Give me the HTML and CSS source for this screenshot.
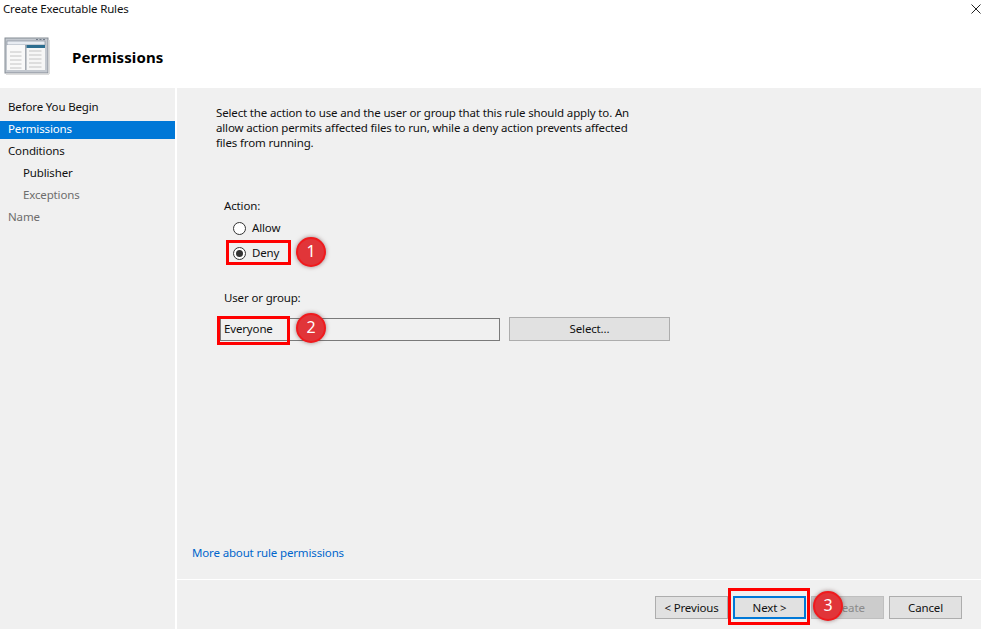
FILE: index.html
```html
<!DOCTYPE html>
<html lang="en">
<head>
<meta charset="utf-8">
<title>Create Executable Rules</title>
<link rel="stylesheet" href="styles.css">
</head>
<body>
<div class="dialog">
  <header class="top">
    <div class="titlebar">
      <span class="title">Create Executable Rules</span>
      <svg class="close" width="10" height="10" viewBox="0 0 10 10"><path d="M0.5 0.5L9.5 9.5M9.5 0.5L0.5 9.500" stroke="#222" stroke-width="1" fill="none"/></svg>
    </div>
    <div class="banner">
      <svg class="logo" width="46" height="38" viewBox="0 0 46 38">
        <rect x="1" y="1" width="43" height="35" fill="#c3c8cf" stroke="#868d96"/>
        <rect x="44.500" y="3" width="1.500" height="34" fill="#dcdcdc"/>
        <rect x="2" y="36.500" width="43" height="1.500" fill="#dcdcdc"/>
        <rect x="3" y="4" width="38" height="4" fill="#e8ecf2" stroke="#7b8592" stroke-width=".6"/>
        <rect x="3" y="8" width="18.500" height="25" fill="#f9f9f9"/>
        <rect x="21.500" y="8" width="1" height="25" fill="#6d7580"/>
        <rect x="22.500" y="8" width="18.500" height="25" fill="#f6f6f6"/>
        <rect x="22.500" y="8" width="18.500" height="3" fill="#2c6d8f"/>
        <path d="M6 15h11.500M6 19h11.500M6 23h11.500M6 27h11.500M6 31h11.500M25 14h12.500M25 18h12.500M25 22h12.500M25 26h12.500M25 30h12.500" stroke="#c4c4c4" stroke-width="1" fill="none"/>
        <path d="M32 2.500h2M35.500 2.500h2M39 2.500h2" stroke="#6f7a88" stroke-width="1" fill="none"/>
      </svg>
      <h1 class="heading">Permissions</h1>
    </div>
  </header>
  <div class="body">
    <nav class="nav">
      <div class="nav-item">Before You Begin</div>
      <div class="nav-item active">Permissions</div>
      <div class="nav-item">Conditions</div>
      <div class="nav-item sub">Publisher</div>
      <div class="nav-item sub muted">Exceptions</div>
      <div class="nav-item muted">Name</div>
    </nav>
    <main class="main">
      <div class="content">
        <p class="intro">Select the action to use and the user or group that this rule should apply to. An allow action permits affected files to run, while a deny action prevents affected files from running.</p>
        <div class="field-action">
          <div class="label action-label">Action:</div>
          <div class="radio-row"><span class="radio"></span><span class="radio-text">Allow</span></div>
          <div class="radio-row"><span class="radio on"></span><span class="radio-text">Deny</span></div>
        </div>
        <div class="field-user">
          <div class="label">User or group:</div>
          <div class="user-row">
            <div class="input">Everyone</div>
            <div class="btn select">Select...</div>
          </div>
        </div>
        <a class="more" href="#">More about rule permissions</a>
      </div>
      <footer class="footer">
        <div class="btn wiz">&lt; Previous</div>
        <div class="btn wiz next">Next &gt;</div>
        <div class="btn wiz disabled">Create</div>
        <div class="btn wiz">Cancel</div>
      </footer>
    </main>
  </div>
  <div class="mark box-1"></div>
  <div class="mark box-2"></div>
  <div class="mark box-3"></div>
  <div class="badge badge-1">1</div>
  <div class="badge badge-2">2</div>
  <div class="badge badge-3">3</div>
</div>
</body>
</html>
```
FILE: styles.css
```css
* { box-sizing: border-box; }
html, body { margin: 0; padding: 0; }
body { font-family: "Noto Sans", "Open Sans", sans-serif; font-size: 11.5px; letter-spacing: -0.15px; color: #111; background: #fff; }
.dialog { position: relative; width: 981px; height: 629px; overflow: hidden; display: flex; flex-direction: column; }
.top { height: 88px; background: #fff; flex: none; }
.titlebar { height: 17px; display: flex; justify-content: space-between; align-items: flex-start; padding: 1px 0 0 3px; }
.title { line-height: 15px; }
.close { margin-top: 3px; flex: none; }
.banner { display: flex; align-items: flex-start; padding: 20px 0 0 4px; }
.logo { flex: none; }
.heading { margin: 10px 0 0 22px; font-size: 15px; line-height: 20px; font-weight: 700; color: #000; letter-spacing: 0.1px; }
.body { flex: 1; display: flex; background: #fff; min-height: 0; }
.nav { width: 175px; flex: none; background: #f0f0f0; padding-top: 9px; }
.nav-item { height: 22px; line-height: 20px; padding-left: 8px; color: #111; }
.nav-item.active { height: 18px; line-height: 16px; margin: 2px 0; background: #0078d7; color: #fff; }
.nav-item.sub { padding-left: 23px; }
.nav-item.muted { color: #6d6d6d; }
.main { margin-left: 2px; flex: 1; background: #f0f0f0; display: flex; flex-direction: column; min-width: 0; }
.content { flex: 1; padding: 17px 0 0 15px; display: flex; flex-direction: column; border-bottom: 1px solid #fff; }
.intro { margin: 0 0 0 24px; width: 424px; line-height: 15px; }
.field-action { margin: 48px 0 0 32px; }
.label { line-height: 14px; padding-bottom: 2px; }
.action-label { line-height: 16px; padding-bottom: 0; }
.radio-row { display: flex; align-items: center; gap: 6px; height: 25px; margin-left: 9px; }
.radio-text { padding-bottom: 2px; }
.field-action .label + .radio-row { margin-top: 2px; }
.radio { width: 13px; height: 13px; border: 1px solid #333; border-radius: 50%; background: #fff; position: relative; display: block; flex: none; }
.radio.on::after { content: ""; position: absolute; left: 2px; top: 2px; width: 7px; height: 7px; border-radius: 50%; background: #333; }
.field-user { margin: 25px 0 0 32px; }
.user-row { display: flex; align-items: flex-start; gap: 9px; margin-top: 10px; margin-left: -4px; }
.input { width: 280px; height: 23px; margin-top: 1px; border: 1px solid #7a7a7a; background: #f0f0f0; line-height: 19px; padding-left: 3px; }
.btn { border: 1px solid #adadad; background: #e1e1e1; text-align: center; color: #111; }
.select { width: 161px; height: 24px; line-height: 21px; }
.more { margin: 203px 0 0 0; color: #0066cc; text-decoration: none; line-height: 17px; }
.footer { height: 49px; flex: none; display: flex; align-items: flex-start; justify-content: flex-end; gap: 5px; padding: 16px 19px 0 0; }
.wiz { width: 73px; height: 23px; line-height: 21px; }
.next { border: 2px solid #0078d7; line-height: 19px; }
.disabled { background: #cccccc; border-color: #bfbfbf; color: #8a8a8a; }
.mark { position: absolute; border: 3px solid #f00; }
.box-1 { left: 226px; top: 240px; width: 65px; height: 25px; }
.box-2 { left: 217px; top: 316px; width: 73px; height: 29px; }
.box-3 { left: 728px; top: 588px; width: 82px; height: 37px; }
.badge { position: absolute; width: 30px; height: 30px; border-radius: 50%; background: #e13539; border: 2px solid #f01a1d; color: #fff; font-size: 16px; letter-spacing: 0; line-height: 25px; text-align: center; box-shadow: 0 0 4px rgba(90,40,40,.55); }
.badge-1 { left: 296px; top: 237px; }
.badge-2 { left: 296px; top: 313px; }
.badge-3 { left: 813px; top: 591px; }
```
